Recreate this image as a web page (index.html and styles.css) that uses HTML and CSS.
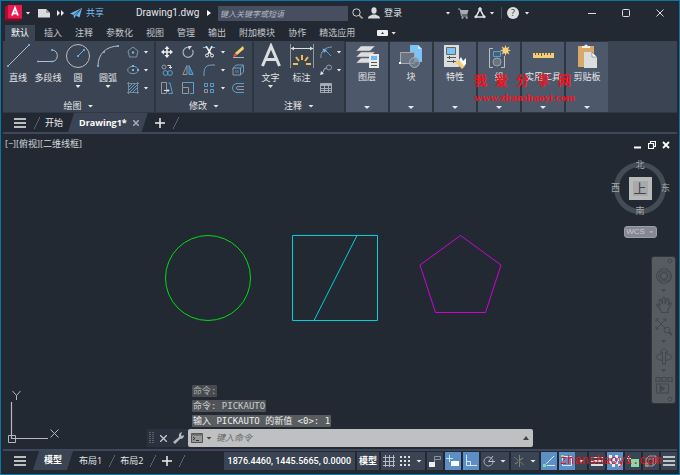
FILE: index.html
```html
<!DOCTYPE html>
<html lang="zh-CN">
<head>
<meta charset="utf-8">
<meta name="viewport" content="width=device-width, initial-scale=1">
<title>Drawing1.dwg</title>
<link rel="stylesheet" href="styles.css">
</head>
<body>
<div class="app">
  <header class="titlebar">
    <button class="logo" aria-label="应用程序菜单"><svg width="17" height="16" viewBox="0 0 17 16"><path d="M0 2 3 0V13L0 16Z" fill="#a80f35"/><path d="M0 16 3 13H17V14L14 16Z" fill="#7d0c2b"/><path d="M3 0H17V13.500H3Z" fill="#ea1a50"/><path d="M7 10.500 10 3 13 10.500M8 8.300H12" fill="none" stroke="#fff" stroke-width="1.800"/></svg></button>
    <button class="cell w12" aria-label="展开"><i class="caret"></i></button>
    <button class="cell w20" aria-label="新建"><svg width="13" height="10" viewBox="0 0 13 10"><path d="M0 1H8L12 5V9.500H0Z" fill="#d9dbdc"/><path d="M8 1V5H12Z" fill="#9ca1a6"/></svg></button>
    <button class="cell w12" aria-label="更多"><svg width="7" height="6"><path d="M0 0 3 3 0 6ZM4 0 7 3 4 6Z" fill="#eee"/></svg></button>
    <button class="share"><svg width="12" height="11" viewBox="0 0 12 11"><path d="M0 5.500 12 0 9.500 9.500 6 7.500 4 10.500 3.500 7Z" fill="#6cb8ee"/><path d="M3.500 7 10.500 1.500 6 7.500" stroke="#22303f" fill="none" stroke-width=".7"/></svg>共享</button>
    <h1 class="doc-title">Drawing1.dwg</h1>
    <span class="cell w18"><svg width="4" height="6"><path d="M0 0 4 3 0 6Z" fill="#fff"/></svg></span>
    <input class="search" type="search" aria-label="搜索" placeholder="键入关键字或短语">
    <button class="cell w18" aria-label="查找"><svg width="11" height="11" viewBox="0 0 11 11" fill="none"><circle cx="4.500" cy="4.500" r="3.700" stroke="#d0d3d6"/><path d="M7 7 10.500 10.500" stroke="#b8a58c" stroke-width="1.600"/></svg></button>
    <button class="login"><svg width="12" height="12" viewBox="0 0 12 12" fill="#d9dbdc"><ellipse cx="6" cy="3.500" rx="2.600" ry="3.300"/><path d="M0 11.500C0 8.500 3 8.500 4.500 7.500H7.500C9 8.500 12 8.500 12 11.500Z"/></svg>登录</button>
    <div class="title-tools">
      <button class="cell w10" aria-label="账户选项"><i class="caret"></i></button>
      <button class="cell w20" aria-label="商店"><svg width="11" height="11" viewBox="0 0 11 11"><path d="M0 1H2L3.500 8H9.500" stroke="#a9abad" fill="none"/><path d="M2.300 2H10.500L9.300 6.500H3.300Z" fill="#a9abad"/><circle cx="4.500" cy="9.700" r="1.100" fill="#a9abad"/><circle cx="8.700" cy="9.700" r="1.100" fill="#a9abad"/></svg></button>
      <button class="cell w14" aria-label="Autodesk"><svg width="12" height="12" viewBox="0 0 12 12" fill="none" stroke="#dfe1e2"><path d="M6 2 2 10H10Z" stroke-width="1.600"/><circle cx="6" cy="2" r="1.300" fill="#dfe1e2"/><circle cx="1.800" cy="9.800" r="1" fill="#dfe1e2"/><circle cx="10.200" cy="9.800" r="1" fill="#dfe1e2"/></svg></button>
      <button class="cell w10" aria-label="选项"><i class="caret"></i></button>
      <span class="divider"></span>
      <button class="help" aria-label="帮助">?</button>
      <button class="cell w12" aria-label="帮助选项"><i class="caret"></i></button>
    </div>
    <div class="window-controls">
      <button class="cell" aria-label="最小化"><svg width="8" height="8"><path d="M0 4.500H8" stroke="#ddd"/></svg></button>
      <button class="cell" aria-label="最大化"><svg width="8" height="8"><rect x=".5" y=".5" width="7" height="7" rx="1" fill="none" stroke="#ddd"/></svg></button>
      <button class="cell" aria-label="关闭"><svg width="8" height="8"><path d="M.5.5 7.500 7.500M7.500.5.5 7.500" stroke="#ddd"/></svg></button>
    </div>
  </header>

  <nav class="ribbon-tabs">
    <a class="active" href="#">默认</a><a href="#">插入</a><a href="#">注释</a><a href="#">参数化</a><a href="#">视图</a><a href="#">管理</a><a href="#">输出</a><a href="#">附加模块</a><a href="#">协作</a><a href="#">精选应用</a>
    <button class="ribbon-toggle" aria-label="最小化功能区"><svg width="11" height="6"><rect width="11" height="6" rx="1" fill="#eee"/><path d="M4 4 5.500 2 7 4Z" fill="#333"/></svg><i class="caret"></i></button>
  </nav>

  <section class="ribbon">
    <div class="panel draw">
      <div class="tools">
        <button class="tool"><svg width="26" height="26"><path d="M3 23 24 2" stroke="#b9bec6"/><path d="M2.500 22.500h1v1h-1ZM23.500 1.500h1v1h-1Z" fill="#6cb8ee" stroke="#6cb8ee"/></svg>直线</button>
        <button class="tool"><svg width="26" height="26"><path d="M3 18.500H18A6 6 0 0 0 18 7" fill="none" stroke="#b9bec6"/><path d="M2.500 18h1v1h-1ZM16.500 18h1v1h-1ZM16.500 6.500h1v1h-1Z" fill="#6cb8ee" stroke="#6cb8ee"/></svg>多段线</button>
        <button class="tool"><svg width="26" height="26"><circle cx="13" cy="13" r="11.500" fill="none" stroke="#b9bec6"/><path d="M13 13 19 7" stroke="#6cb8ee"/><path d="M12.500 12.500h1v1h-1ZM18.500 6.500h1v1h-1Z" fill="#6cb8ee" stroke="#6cb8ee"/></svg>圆<i class="caret"></i></button>
        <button class="tool"><svg width="26" height="26"><path d="M3 23C3 11 11 3 24 3" fill="none" stroke="#b9bec6"/><path d="M2.500 22.500h1v1h-1ZM8.500 8.500h1v1h-1ZM22.500 2.500h1v1h-1Z" fill="#6cb8ee" stroke="#6cb8ee"/></svg>圆弧<i class="caret"></i></button>
        <div class="small-tools">
          <button aria-label="多边形"><svg width="12" height="12"><path d="M6 1 11 5 9.500 11H2.500L1 5Z" fill="none" stroke="#8a929f"/><circle cx="6" cy="6.500" r="1.200" fill="#6cb8ee"/></svg></button><button aria-label="多边形选项"><i class="caret"></i></button>
          <button aria-label="椭圆"><svg width="12" height="12"><ellipse cx="6" cy="6" rx="5.300" ry="3.700" fill="none" stroke="#8a929f"/><path d="M5 5h2v2H5ZM10 5h2v2h-2ZM5 1h2v2H5Z" fill="#6cb8ee"/></svg></button><button aria-label="椭圆选项"><i class="caret"></i></button>
          <button aria-label="图案填充"><svg width="12" height="12"><path d="M1.500 0V12M10.500 0V12M0 1.500H12M0 10.500H12" stroke="#7d8592"/><path d="M2 5 5 2M2 8 8 2M3 10 10 3M6 10 10 6" stroke="#5a9fd2"/></svg></button><button aria-label="图案填充选项"><i class="caret"></i></button>
        </div>
      </div>
      <button class="panel-title">绘图<i class="caret wide"></i></button>
    </div>

    <div class="panel modify">
      <div class="tools">
        <div class="modify-grid">
          <button aria-label="移动"><svg width="12" height="12"><path d="M6 1V11M1 6H11" stroke="#eee" stroke-width="1.500"/><path d="M6 0 8.500 3H3.500ZM6 12 8.500 9H3.500ZM0 6 3 3.500V8.500ZM12 6 9 3.500V8.500Z" fill="#eee"/></svg></button>
          <button aria-label="旋转"><svg width="12" height="12"><path d="M7.500 1.500A5 5 0 1 0 10.500 4" fill="none" stroke="#aeb4bd" stroke-width="1.200"/><path d="M6 0H10L7 4Z" fill="#d5d8dc"/></svg></button>
          <button aria-label="修剪"><svg width="12" height="12"><path d="M0 1.500H4M8 1.500H12" stroke="#6cb8ee"/><path d="M3 0 8 8M9 0 5 8" stroke="#eee" stroke-width="1.500"/><circle cx="4" cy="9.500" r="1.500" fill="none" stroke="#eee"/><circle cx="9" cy="9.500" r="1.500" fill="none" stroke="#eee"/></svg></button>
          <button aria-label="修剪选项"><i class="caret"></i></button>
          <button aria-label="删除"><svg width="12" height="12"><path d="M11 0 12 3 5 9 3 7Z" fill="#f4d16b"/><path d="M3 7 5 9 3.500 10.500H1Z" fill="#ee5340"/><path d="M1 11.500H12" stroke="#aeb4bd"/></svg></button>
          <button aria-label="复制"><svg width="12" height="12" fill="none"><circle cx="3" cy="3" r="2" stroke="#9299a5"/><path d="M6.500 1.500H9.500V4M8 3 9.500 4.500 11 3" stroke="#ddd"/><circle cx="4.500" cy="9" r="2.400" stroke="#5a9fd2"/><circle cx="9" cy="9" r="2.400" stroke="#5a9fd2"/></svg></button>
          <button aria-label="镜像"><svg width="12" height="12"><path d="M5 1.500V10.500H.8Z" fill="none" stroke="#9299a5"/><path d="M7 1.500V10.500H11.200Z" fill="#386b91" stroke="#5a9fd2"/></svg></button>
          <button aria-label="圆角"><svg width="12" height="12" fill="none"><path d="M1 12V9M8 1H12" stroke="#9299a5"/><path d="M1 9Q1 1 8 1" stroke="#5a9fd2"/></svg></button>
          <button aria-label="圆角选项"><i class="caret"></i></button>
          <button aria-label="分解"><svg width="12" height="12" fill="none"><path d="M1 4.500 4 1H11.500V8L8.500 11" stroke="#5a9fd2"/><path d="M1 4H8.500V11H1ZM8.500 4 11.500 1" stroke="#9299a5"/><path d="M3 6H7V9H3Z" fill="#386b91"/></svg></button>
          <button aria-label="拉伸"><svg width="12" height="12" fill="none"><path d="M.5 .5V11.500H5.500V.5Z" stroke="#9299a5"/><path d="M7.500 1H9L11.500 11.500H7.500" stroke="#5a9fd2"/><path d="M3 8.500H8M6.500 7 8 8.500 6.500 10" stroke="#ddd"/></svg></button>
          <button aria-label="缩放"><svg width="12" height="12" fill="none"><path d="M.5.5H11.500V11.500H8" stroke="#5a9fd2"/><path d="M.5 5.500H6.500V11.500H.5ZM.5 5V.5" stroke="#9299a5"/></svg></button>
          <button aria-label="阵列"><svg width="12" height="12" fill="none"><path d="M1.500 1.500H4.500V4.500H1.500ZM7.500 1.500H10.500V4.500H7.500ZM7.500 7.500H10.500V10.500H7.500Z" stroke="#5a9fd2"/><path d="M1.500 7.500H4.500V10.500H1.500Z" stroke="#9299a5"/></svg></button>
          <button aria-label="阵列选项"><i class="caret"></i></button>
          <button aria-label="偏移"><svg width="12" height="12" fill="none"><path d="M12 1.500H5A4.500 4.500 0 0 0 5 10.500H12" stroke="#5a9fd2"/><path d="M12 4.500H6A1.500 1.500 0 0 0 6 7.500H12" stroke="#9299a5"/></svg></button>
        </div>
      </div>
      <button class="panel-title">修改<i class="caret wide"></i></button>
    </div>

    <div class="panel annotate">
      <div class="tools">
        <button class="tool"><svg width="26" height="26"><path d="M4.500 23 13 3 21.500 23M8 16.500H18" fill="none" stroke="#dcdee0" stroke-width="3"/></svg>文字<i class="caret"></i></button>
        <button class="tool"><svg width="26" height="26"><path d="M1.500 1V25M24.500 1V25" stroke="#9299a5"/><path d="M2 5.500H24" stroke="#dcdee0"/><path d="M2 5.500 5 3.500V7.500ZM24 5.500 21 3.500V7.500Z" fill="#dcdee0"/><path d="M13 12V17M7 14 10 18M19 14 16 18M4 21H9M17 21H22" stroke="#f2bc55" stroke-width="2"/></svg>标注</button>
        <div class="small-tools">
          <button aria-label="半径标注"><svg width="12" height="12" fill="none"><path d="M1 12C0 6 5 1 12 1" stroke="#9299a5"/><path d="M4 3 11 10" stroke="#5a9fd2"/><path d="M2.500 2.500 7 4 4 7Z" fill="#6cb8ee"/></svg></button><button aria-label="标注选项"><i class="caret"></i></button>
          <button aria-label="引线"><svg width="12" height="12" fill="none"><circle cx="9" cy="3.500" r="2.500" stroke="#9299a5"/><path d="M6.500 4C3 4 5 7 1.500 9.500" stroke="#b9bec6"/><path d="M0 11 1 7 4 10Z" fill="#ddd"/></svg></button><button aria-label="引线选项"><i class="caret"></i></button>
          <button aria-label="表格"><svg width="12" height="12" fill="none"><path d="M.5 1.500H11.500V10.500H.5ZM1 6.500H11M1 8.500H11M4.500 4V10M8.500 4V10" stroke="#a5abb4"/><path d="M1 3H11" stroke="#a5abb4" stroke-width="2"/></svg></button>
        </div>
      </div>
      <button class="panel-title">注释<i class="caret wide"></i></button>
    </div>

    <div class="big-buttons">
      <button class="big"><svg width="28" height="26"><path d="M8 2H22L17 7H3ZM8 8H22L17 13H3ZM8 14H22L17 19H3Z" fill="#dcdddd" stroke="#667" stroke-width=".5"/><path d="M16 10H26V24H16Z" fill="#e8e8e8"/><path d="M18 12H24V16H18Z" fill="#6cb8ee"/><path d="M18 18.500H24M18 21.500H24" stroke="#555"/></svg>图层<i class="caret wide"></i></button>
      <button class="big"><svg width="28" height="26"><path d="M13 1H21L25 5V18H13Z" fill="#7cc4f5"/><path d="M21 1V5H25Z" fill="#c7e6fb"/><path d="M3.500 8.500H17.500V19.500H3.500Z" fill="#697382" stroke="#a5abb4"/><circle cx="17.500" cy="18.500" r="5" fill="#7c8794" fill-opacity=".7" stroke="#a5abb4"/><path d="M2 18h2v2H2Z" fill="#fff"/></svg>块<i class="caret wide"></i></button>
      <button class="big"><svg width="28" height="26"><path d="M3 1H18V23H3Z" fill="#dcdddd"/><path d="M5.500 3.500H14.500V10.500H5.500Z" fill="#7cc4f5" stroke="#666"/><path d="M6 13.500H15M6 17.500H15M8.500 12V15M12.500 16V19" stroke="#555"/><path d="M14 18 18 16 24 22 21 25Z" fill="#f4cc78"/><path d="M18 16 20 13 22 17 25 14 25 20 23 22Z" fill="#fff"/></svg>特性<i class="caret wide"></i></button>
      <button class="big"><svg width="28" height="26"><path d="M8 4.500H4.500V23.500H8M16 23.500H19.500V12" fill="none" stroke="#b9bec6"/><path d="M8.500 7.500H15.500V12.500H8.500Z" fill="#3f617e" stroke="#5a9fd2"/><circle cx="12" cy="18" r="4" fill="#697382" stroke="#9ca3ad"/><path d="m20.500 1 1 3 3-1.500-1.500 3L26 6.500l-3 1 1.500 3-3-1.500-1 3-1-3-3 1.500 1.500-3-3-1 3-1-1.500-3 3 1.500Z" fill="#f8d07a"/></svg>组<i class="caret wide"></i></button>
      <button class="big"><svg width="28" height="26"><path d="M4 9H25V14H4Z" fill="#f4cc78"/><path d="M6.500 9V11M9.500 9V11M12.500 9V12M15.500 9V11M18.500 9V11M21.500 9V11" stroke="#735a2a"/></svg>实用工具<i class="caret wide"></i></button>
      <button class="big"><svg width="28" height="26"><path d="M5 2H21V23H5Z" fill="#d9a96c"/><path d="M9 2H11Q13-1 15 2H17V4H9Z" fill="#eee"/><path d="M11 8H19L24 13V24H11Z" fill="#dcdddd"/><path d="M19 8V13H24Z" fill="#fff" stroke="#555" stroke-width=".5"/></svg>剪贴板<i class="caret wide"></i></button>
    </div>
    <div class="watermark-top"><p class="cn"><span>我</span><span>爱</span><span>分</span><span>享</span><span>网</span></p><p>www.zhanshaoyi.com</p></div>
  </section>

  <nav class="file-tabs">
    <button class="menu" aria-label="菜单"><svg width="12" height="10"><path d="M0 1H12M0 5H12M0 9H12" stroke="#eee" stroke-width="1.500"/></svg></button>
    <span class="slash"></span>
    <a href="#">开始</a>
    <a class="file-tab" href="#">Drawing1*<svg width="6" height="6"><path d="M0 0 6 6M6 0 0 6" stroke="#aab" stroke-width="1.500"/></svg></a>
    <button class="plus" aria-label="新图形"><svg width="10" height="10"><path d="M5 0V10M0 5H10" stroke="#eee" stroke-width="1.500"/></svg></button>
    <span class="slash"></span>
  </nav>

  <main class="canvas">
    <svg class="drawing" fill="none" aria-hidden="true">
      <circle cx="205" cy="144" r="42.500" stroke="#00dc14"/>
      <path d="M289.500 101.500H374.500V186.500H289.500ZM354 101.500 311 186.500" stroke="#00d0d8"/>
      <path d="M457.500 101.500 498 131 482.500 178.500H432.500L417 131Z" stroke="#d400d8"/>
    </svg>
    <div class="canvas-top">
      <p class="view-label"><span>[−]</span><span>[俯视]</span><span>[二维线框]</span></p>
      <div class="view-side">
        <div class="view-controls">
          <button aria-label="最小化视口"><svg width="8" height="8"><path d="M0 6.500H7" stroke="#fff" stroke-width="2"/></svg></button>
          <button aria-label="还原视口"><svg width="8" height="8" fill="none" stroke="#fff"><path d="M2.500 2.500V.5H7.500V5.500H5.500M.5 2.500H5.500V7.500H.5Z" stroke-width="1.200"/></svg></button>
          <button aria-label="关闭视口"><svg width="8" height="8"><path d="M1 1 7 7M7 1 1 7" stroke="#fff" stroke-width="1.800"/></svg></button>
        </div>
        <div class="viewcube"><span class="n">北</span><span class="w">西</span><button class="face">上</button><span class="e">东</span><span class="s">南</span></div>
        <button class="wcs">WCS<i class="caret"></i></button>
      </div>
    </div>
    <div class="navbar">
      <button aria-label="控制盘"><svg width="18" height="18" fill="none" stroke="#41484f"><circle cx="9" cy="9" r="7.500"/><circle cx="9" cy="9" r="3.500" stroke-width="1.500"/><path d="M5 4H13L15 8V14H5L3 10Z"/></svg></button>
      <i class="caret dark"></i>
      <button aria-label="平移"><svg width="18" height="18" fill="none" stroke="#41484f" stroke-width="1.200"><path d="M5 13 1.500 9Q2 7 5 9.500L4 4Q5 2.500 6 4L7.500 8 7.500 2Q9 .5 10 2V8L12 3Q13.500 2 14 4L13 9 15 6.500Q17 6.500 16 8L13 14V16.500H6.500Z"/></svg></button>
      <button aria-label="缩放"><svg width="18" height="18" fill="none" stroke="#41484f"><path d="M1 1 11 11M11 1 1 11M1 4V1H4M8 1H11V4M1 8V11H4"/><circle cx="12" cy="12" r="3"/><path d="M14 14 17 17" stroke-width="2"/></svg></button>
      <i class="caret dark"></i>
      <button aria-label="动态观察"><svg width="18" height="18" fill="none" stroke="#41484f"><ellipse cx="9" cy="10" rx="8" ry="3.500"/><path d="M7.500 17V5H5L9 1 13 5H10.500V17Z" fill="#565c60"/></svg></button>
      <i class="caret dark"></i>
      <button aria-label="ShowMotion"><svg width="18" height="18" fill="none" stroke="#41484f"><path d="M1 1.500H5V5.500H1ZM7 1.500H11V5.500H7ZM13 1.500H17V5.500H13ZM1.500 8H13.500V17H1.500Z" stroke-width="1.200"/><path d="M5 9.500 10 12.500 5 15.500Z" fill="#41484f"/></svg></button>
      <svg class="nav-dot top" width="6" height="6"><circle cx="3" cy="3" r="2" fill="none" stroke="#41484f"/></svg>
      <svg class="nav-dot bottom" width="6" height="6"><circle cx="3" cy="3" r="2" fill="none" stroke="#41484f"/></svg>
    </div>
    <div class="canvas-bottom">
      <svg class="ucs" width="54" height="54" fill="none" stroke="#b5b8ba"><path d="M6.500 11V47.500H43" stroke-width="1.200"/><path d="M3.500 44.500H10.500V51.500H3.500ZM7.500 0 11.500 4.500 15.500 0M11.500 4.500V9M45.500 38.500 53.500 46.500M53.500 38.500 45.500 46.500"/></svg>
      <div class="command">
        <div class="history"><p class="old">命令:</p><p class="mid">命令: PICKAUTO</p><p>输入 PICKAUTO 的新值 &lt;0&gt;: 1</p></div>
        <div class="command-row">
          <div class="command-grip">
            <svg width="5" height="12"><path d="M1 0V12M4 0V12" stroke="#8a9098" stroke-dasharray="1 1"/></svg>
            <button aria-label="关闭命令行"><svg width="7" height="7"><path d="M0 0 7 7M7 0 0 7" stroke="#c5c8cb" stroke-width="1.300"/></svg></button>
            <button aria-label="自定义"><svg width="11" height="12"><path d="M0 10 6 5Q5 1 9 0L8 3 9 4 11 3Q11 7 7 7L2 12Z" fill="#b5b8ba"/></svg></button>
          </div>
          <div class="command-box">
            <svg width="12" height="10"><path d="M.5.5H11.500V9.500H.5Z" fill="#999" stroke="#555"/><path d="M0 1.500H12" stroke="#666" stroke-width="2"/><path d="M2 4 4 5.500 2 7M5 7.500H8" stroke="#333" fill="none"/></svg>
            <i class="caret shade"></i>
            <input type="text" aria-label="命令" placeholder="键入命令">
            <svg width="6" height="4"><path d="M0 4 3 0 6 4Z" fill="#444"/></svg>
          </div>
        </div>
      </div>
    </div>
  </main>

  <footer class="status">
    <nav class="layouts">
      <button class="menu" aria-label="布局菜单"><svg width="12" height="10"><path d="M0 1H12M0 5H12M0 9H12" stroke="#eee" stroke-width="1.500"/></svg></button>
      <a class="model" href="#">模型</a>
      <a href="#">布局1</a><span class="slash"></span>
      <a href="#">布局2</a><span class="slash"></span>
      <button class="plus" aria-label="新建布局"><svg width="10" height="10"><path d="M5 0V10M0 5H10" stroke="#eee" stroke-width="1.500"/></svg></button>
      <span class="slash"></span>
    </nav>
    <div class="toggles">
      <button class="coords">1876.4460, 1445.5665, 0.0000</button>
      <button class="space">模型</button>
      <div class="group"><button aria-label="栅格"><svg width="12" height="12"><path d="M2.500 0V12M6.500 0V12M10.500 0V12M0 2.500H12M0 6.500H12M0 10.500H12" stroke="#b5bac2"/></svg></button><button aria-label="捕捉"><svg width="12" height="12"><path d="M1 2H12M1 6H12M1 10H12" stroke="#dcdee0" stroke-width="2" stroke-dasharray="2 2"/></svg></button><button class="narrow" aria-label="捕捉选项"><i class="caret wide"></i></button></div>
      <button aria-label="推断约束"><svg width="12" height="12"><path d="M5.500 1.500H11.500V4.500H5.500ZM5.500 4V7" fill="none" stroke="#8a929f"/><path d="M0 7H6V12H0Z" fill="#eee"/></svg></button>
      <button class="on" aria-label="动态输入"><svg width="14" height="12"><path d="M3.500 0V7M0 3.500H7" stroke="#cde3f6"/><path d="M5 6H13V11H5Z" fill="#fff"/></svg></button>
      <button class="on" aria-label="正交"><svg width="12" height="12"><path d="M1.500 0V10.500H12M1.500 6.500H5.500V10" fill="none" stroke="#d5e8f8"/></svg></button>
      <div class="group"><button aria-label="极轴追踪"><svg width="13" height="12"><circle cx="5.500" cy="6.500" r="4.500" fill="none" stroke="#a5abb4"/><path d="M5.500 6.500 10 1M5.500 6.500H12" stroke="#b9bec6"/></svg></button><button class="narrow" aria-label="极轴选项"><i class="caret wide"></i></button></div>
      <div class="group"><button aria-label="等轴测"><svg width="12" height="12"><path d="M6.500 0V12" stroke="#4ea06b"/><path d="M1 2 11 10" stroke="#a25763"/><path d="M2 9 5 7M7 5 10 3" stroke="#8a929f"/></svg></button><button class="narrow" aria-label="等轴测选项"><i class="caret wide"></i></button></div>
      <button class="on" aria-label="对象追踪"><svg width="12" height="12"><path d="M2 10 11 1M4 10.500H12" stroke="#d5e8f8"/><path d="M0 9h3v3H0Z" fill="#7ee0a0"/></svg></button>
      <div class="group"><button class="on" aria-label="对象捕捉"><svg width="12" height="12"><path d="M1.500 1.500H10.500V10.500H1.500Z" fill="none" stroke="#d5e8f8"/><path d="M0 0h3v3H0Z" fill="#7ee0a0"/></svg></button><button class="narrow" aria-label="对象捕捉选项"><i class="caret wide"></i></button></div>
      <button aria-label="线宽"><svg width="12" height="12"><path d="M0 2.500H12" stroke="#ddd"/><path d="M0 6H12" stroke="#ddd" stroke-width="2"/><path d="M0 10H12" stroke="#ddd" stroke-width="2"/></svg></button>
      <button class="on" aria-label="透明度"><svg width="12" height="12"><path d="M0 1.500H12M0 7.500H12" stroke="#eee" stroke-width="3" stroke-dasharray="3 3"/><path d="M3 4.500H12M3 10.500H12" stroke="#eee" stroke-width="3" stroke-dasharray="3 3"/></svg></button>
      <button aria-label="选择循环"><svg width="12" height="12"><path d="M0 3.500H4M1.500 1V7" stroke="#ddd"/><path d="M4 4H12V12H4Z" fill="#83dca4"/></svg></button>
      <button aria-label="三维捕捉"><svg width="12" height="12" fill="none"><path d="M1 4H8V11H1ZM1 4 4 1H11V8L8 11M8 4 11 1" stroke="#9299a5"/><path d="M0 8h3v3H0Z" stroke="#e59356"/></svg></button>
      <button aria-label="自定义"><svg width="12" height="12"><path d="M0 2H12M0 6H12M0 10H12" stroke="#eee" stroke-width="1.500"/></svg></button>
      <span class="watermark-bottom">zhanshaoyi.com</span>
    </div>
  </footer>
</div>
</body>
</html>
```
FILE: styles.css
```css
* { box-sizing: border-box; }

:root {
  --bg: #222933;
  --panel: #3b4453;
  --raised: #4e586b;
  --accent: #5c8fc5;
  --text: #e4e6e8;
}

body {
  margin: 0;
  background: var(--bg);
  color: var(--text);
  font: 9px/12px "Open Sans", "Noto Sans CJK SC", sans-serif;
}

button, input {
  margin: 0;
  padding: 0;
  border: 0;
  background: none;
  color: inherit;
  font: inherit;
}

a { color: inherit; text-decoration: none; }
p, h1 { margin: 0; }
svg { display: block; flex: none; }

.app {
  display: flex;
  flex-direction: column;
  min-height: 100vh;
  border: 1px solid #0c75a4;
}

.caret {
  width: 5px;
  height: 3px;
  flex: none;
  background: #e6e8ea;
  clip-path: polygon(0 0, 100% 0, 50% 100%);
}
.caret.wide { width: 6px; }
.caret.dark { background: #41484f; }
.caret.shade { background: #444; width: 6px; }

/* Title bar */
.titlebar {
  display: flex;
  align-items: center;
  height: 24px;
  padding: 0 2px 0 3px;
}
.cell, .share, .login, .logo {
  display: flex;
  align-items: center;
  justify-content: center;
  flex: none;
}
.logo { width: 18px; }
.w10 { width: 10px; }
.w12 { width: 12px; }
.w14 { width: 14px; }
.w18 { width: 18px; }
.w20 { width: 20px; }
.share { gap: 4px; margin-left: 4px; color: #79bcec; }
.doc-title {
  min-width: 64px;
  margin-left: 32px;
  font-family: Roboto, sans-serif;
  font-size: 10px;
  font-weight: 400;
  white-space: nowrap;
}
.search {
  flex: 0 1 130px;
  min-width: 60px;
  height: 15px;
  padding: 0 2px;
  background: #464e60;
  font-size: 8px;
  font-style: italic;
}
input::placeholder { color: #b3b8c1; opacity: 1; }
.login { gap: 4px; margin-left: 2px; }
.title-tools {
  display: flex;
  align-items: center;
  margin-left: auto;
  margin-right: 42px;
}
.divider { width: 1px; height: 12px; margin: 0 3px 0 4px; background: #454d5b; }
.help {
  width: 12px;
  height: 12px;
  margin: 0 2px;
  border-radius: 50%;
  background: #dcdee0;
  color: #333;
}
.window-controls { display: flex; }
.window-controls .cell { width: 34px; height: 20px; }

/* Ribbon */
.ribbon-tabs { display: flex; height: 16px; padding-left: 4px; color: #c2c6cc; }
.ribbon-tabs a { padding: 2px 7px 0 6px; white-space: nowrap; }
.ribbon-tabs .active { margin-right: 3px; padding-right: 6px; background: var(--panel); color: #fff; }
.ribbon-toggle { display: flex; align-items: center; gap: 3px; margin-left: 15px; }

.ribbon {
  position: relative;
  display: flex;
  margin: 0 2px;
  background: var(--panel);
  border-bottom: 1px solid #303845;
}
.panel { border-right: 2px solid #2d3541; }
.tools { display: flex; height: 59px; padding-top: 2px; }
.tool {
  display: flex;
  flex-direction: column;
  align-items: center;
  width: 31px;
  white-space: nowrap;
}
.tool svg { margin-bottom: 3px; }
.tool .caret { margin-top: 1px; }
.draw .tool { width: 30px; }
.small-tools { display: grid; grid-template-columns: 18px 8px; grid-auto-rows: 18px; }
.small-tools button, .modify-grid button {
  display: flex;
  align-items: center;
  justify-content: center;
}
.draw .small-tools { padding: 0 3px 0 1px; }
.draw { width: 153px; }
.modify { width: 98px; }
.annotate { width: 92px; }
.modify-grid {
  display: grid;
  grid-template-columns: 21px 21px 21px 8px 22px;
  grid-auto-rows: 18px;
}
.annotate .tools { padding-left: 1px; }
.panel-title {
  display: flex;
  align-items: center;
  justify-content: center;
  gap: 6px;
  width: 100%;
}
.big-buttons { display: flex; gap: 2px; padding-top: 1px; background: #2d3541; }
.big {
  display: flex;
  flex-direction: column;
  align-items: center;
  width: 42px;
  padding: 2px 0 3px;
  background: var(--raised);
  white-space: nowrap;
}
.big svg { margin-bottom: 1px; }
.big .caret { margin-top: auto; }

.watermark-top {
  position: absolute;
  left: 471px;
  top: 32px;
  color: #f5121b;
  font: bold 11px/14px "Liberation Serif", serif;
  pointer-events: none;
}
.watermark-top .cn {
  display: flex;
  gap: 8px;
  margin-bottom: 3px;
  font: bold 13px/14px "Noto Sans CJK SC", sans-serif;
}

/* Drawing file tabs */
.file-tabs, .layouts { display: flex; align-items: center; }
.file-tabs {
  height: 21px;
  margin: 0 2px;
  border-bottom: 2px solid #3e475c;
}
.menu { width: 12px; margin-left: 11px; }
.slash { width: 6px; height: 12px; background: linear-gradient(to bottom right, transparent 45%, #59616d 46%, #59616d 54%, transparent 55%); }
.file-tabs .slash { margin: 0 5px 0 8px; }
.file-tab {
  display: flex;
  align-items: center;
  gap: 6px;
  align-self: stretch;
  margin-left: 5px;
  padding: 0 9px 0 11px;
  background: var(--panel);
  color: #fff;
  font-weight: 700;
  clip-path: polygon(6px 0, 100% 0, calc(100% - 6px) 100%, 0 100%);
}
.plus { margin-left: 7px; }

/* Drawing area */
.canvas {
  position: relative;
  display: flex;
  flex: 1;
  flex-direction: column;
  margin: 0 2px;
}
.drawing { position: absolute; inset: 0; width: 100%; height: 100%; pointer-events: none; }
.canvas-top { display: flex; justify-content: space-between; }
.view-label { display: flex; padding: 4px 2px; color: #d5d8da; }
.view-side { display: flex; flex-direction: column; align-items: center; width: 74px; padding-top: 7px; }
.view-controls { display: flex; gap: 6px; align-self: flex-end; padding-right: 7px; }
.viewcube {
  position: relative;
  display: grid;
  place-items: center;
  width: 52px;
  height: 52px;
  margin: 13px 0 12px;
  border: 5px solid #444c55;
  border-radius: 50%;
}
.viewcube span { position: absolute; color: #a5aaad; }
.viewcube .n { top: -8px; }
.viewcube .s { bottom: -8px; }
.viewcube .w { left: -8px; }
.viewcube .e { right: -9px; }
.face {
  width: 23px;
  height: 23px;
  border: 4px solid #b8bab9;
  background: #a7a9ad;
  color: #3f444b;
  font-size: 13px;
  line-height: 14px;
}
.wcs {
  display: flex;
  align-items: center;
  justify-content: center;
  gap: 4px;
  width: 33px;
  height: 12px;
  border: 1px solid #9a9ca7;
  border-radius: 3px;
  background: #858793;
  color: #c9cad0;
  font: 8px/10px "Liberation Sans", sans-serif;
}
.wcs .caret { background: #aaabb4; }

.navbar {
  position: absolute;
  top: 122px;
  right: 1px;
  display: flex;
  flex-direction: column;
  align-items: center;
  gap: 4px;
  width: 25px;
  padding: 10px 0 9px;
  border: 1px solid #30363d;
  border-radius: 3px;
  background: #565c60;
}
.nav-dot { position: absolute; right: 2px; }
.nav-dot.top { top: 1px; }
.nav-dot.bottom { bottom: 1px; }

.canvas-bottom { display: flex; align-items: flex-end; margin-top: auto; padding: 0 144px 2px 2px; }
.ucs { margin-bottom: 2px; }
.command { flex: 1; margin-left: 88px; }
.history {
  display: flex;
  flex-direction: column;
  align-items: flex-start;
  gap: 3px;
  padding: 0 0 2px 45px;
  font-family: "DejaVu Sans Mono", "Noto Sans CJK SC", monospace;
}
.history p { height: 12px; padding: 0 1px; border-radius: 1px; background: #5a5d60; color: #eee; white-space: pre; }
.history .old { background: #474b50; color: #a9abad; }
.history .mid { background: #505458; color: #c9cbcd; }
.command-row { display: flex; height: 18px; }
.command-grip { display: flex; align-items: center; justify-content: space-between; width: 41px; padding: 0 4px 0 2px; background: #2b323f; }
.command-box { display: flex; flex: 1; align-items: center; gap: 3px; padding: 0 4px 0 3px; border-radius: 2px; background: #bec0c1; color: #444; }
.command-box input { flex: 1; min-width: 0; padding-left: 1px; font-style: italic; }
.command-box input::placeholder { color: #666; }

/* Status bar */
.status {
  display: flex;
  justify-content: space-between;
  height: 25px;
  margin: 0 2px;
  border-top: 2px solid #3e475c;
}
.layouts { height: 19px; }
.layouts .model {
  align-self: stretch;
  margin: 0 6px 0 7px;
  padding: 3px 11px;
  background: var(--panel);
  color: #fff;
  font-weight: 700;
  clip-path: polygon(6px 0, 100% 0, calc(100% - 6px) 100%, 0 100%);
}
.layouts .slash { margin: 0 5px 0 7px; }
.layouts .plus { margin-left: 1px; }
.toggles { position: relative; display: flex; gap: 2px; height: 18px; margin-top: 1px; }
.toggles button {
  display: flex;
  align-items: center;
  justify-content: center;
  width: 16px;
  height: 18px;
  background: var(--panel);
}
.toggles .on { background: var(--accent); }
.toggles .coords { width: 131px; padding-right: 4px; justify-content: flex-end; font-family: Roboto, sans-serif; font-weight: 500; color: #fff; white-space: nowrap; }
.toggles .space { width: 22px; font-weight: 700; color: #fff; }
.toggles .narrow { width: 12px; }
.group { display: flex; }
.watermark-bottom {
  position: absolute;
  right: 16px;
  top: 2px;
  color: #e0141c;
  font: 12px/14px "Liberation Mono", monospace;
  pointer-events: none;
}
```
